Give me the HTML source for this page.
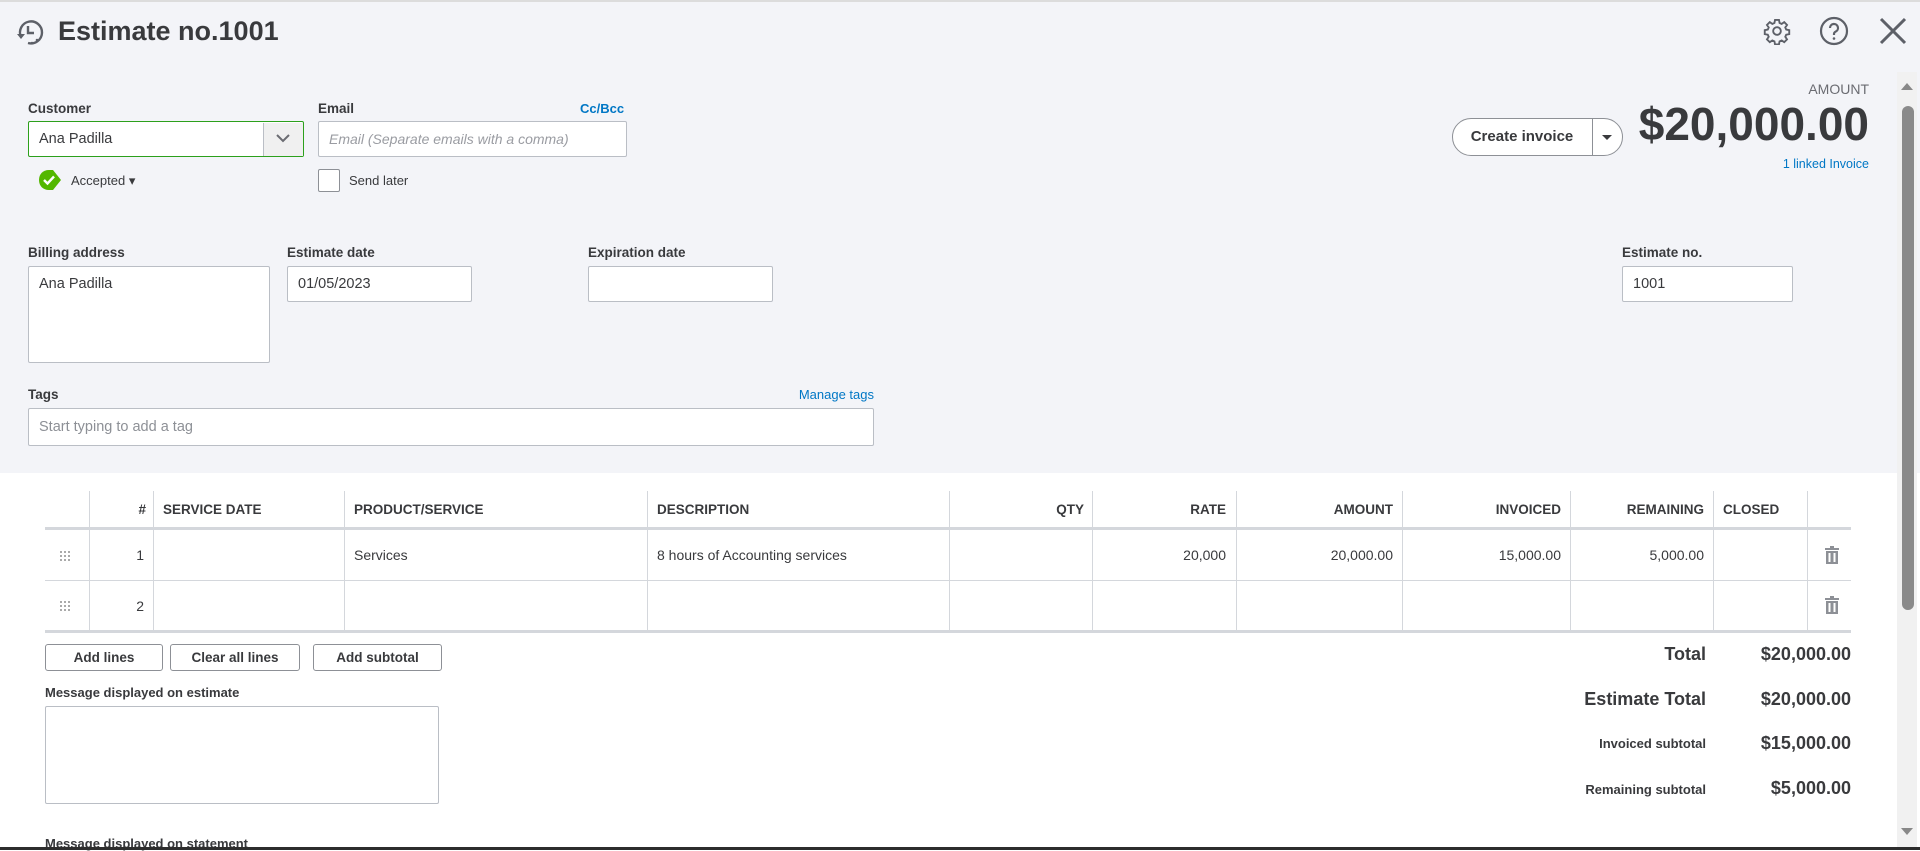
<!DOCTYPE html>
<html><head><meta charset="utf-8"><style>
*{box-sizing:border-box;margin:0;padding:0}
body{width:1920px;height:850px;overflow:hidden;background:#fff;font-family:"Liberation Sans",sans-serif;color:#393a3d;position:relative}
.a{position:absolute}
.top{left:0;top:0;width:1920px;height:473px;background:#f3f4f8;border-top:2px solid #dcdcdc}
.lbl{font-size:13.5px;font-weight:bold;color:#393a3d}
.inp{background:#fff;border:1px solid #babec5;border-radius:2px;font-size:14.5px;padding-left:10px;display:flex;align-items:center}
.lnk{color:#0077c5;font-size:13px;font-weight:bold}
.vl{width:1px;background:#d4d7dc}
.th{font-size:13.5px;font-weight:bold;color:#393a3d;top:502px}
.td{font-size:14px;color:#393a3d}
.btn{border:1px solid #8d9096;border-radius:3px;background:#fff;font-size:13.5px;font-weight:bold;display:flex;align-items:center;justify-content:center;top:644px;height:27px}
.tr{text-align:right;font-weight:bold;color:#393a3d}
</style></head><body>
<div class="a top"></div>
<svg class="a" style="left:13px;top:17px" width="32" height="30" viewBox="0 0 32 30" fill="none" stroke="#5d6068" stroke-width="2.4"><path d="M8 20 A11 11 0 1 1 15 26"/><path d="M15 9 V16 H21"/><path d="M4 17 L8 22 L12 17" fill="#5d6068" stroke="none"/><circle cx="19" cy="26" r="1.3" fill="#5d6068" stroke="none"/><circle cx="24" cy="23" r="1.3" fill="#5d6068" stroke="none"/></svg>
<div class="a" style="left:58px;top:16px;font-size:27px;font-weight:bold;color:#393a3d">Estimate no.1001</div>
<svg class="a" style="left:1763px;top:17px" width="28" height="28" viewBox="0 0 24 24" fill="none" stroke="#5d6068" stroke-width="1.6"><circle cx="12" cy="12" r="3.3"/><path d="M10.3 2.5h3.4l.5 2.6 1.8.8 2.2-1.5 2.4 2.4-1.5 2.2.8 1.8 2.6.5v3.4l-2.6.5-.8 1.8 1.5 2.2-2.4 2.4-2.2-1.5-1.8.8-.5 2.6h-3.4l-.5-2.6-1.8-.8-2.2 1.5-2.4-2.4 1.5-2.2-.8-1.8-2.6-.5v-3.4l2.6-.5.8-1.8-1.5-2.2 2.4-2.4 2.2 1.5 1.8-.8z"/></svg>
<svg class="a" style="left:1819px;top:16px" width="30" height="30" viewBox="0 0 30 30" fill="none" stroke="#5d6068" stroke-width="2.2"><circle cx="15" cy="15" r="13"/><path d="M11 12a4 4 0 1 1 5.5 3.7c-1 .5-1.5 1.2-1.5 2.3v1"/><circle cx="15" cy="22.5" r="1.3" fill="#5d6068" stroke="none"/></svg>
<svg class="a" style="left:1879px;top:17px" width="28" height="28" viewBox="0 0 28 28" stroke="#5d6068" stroke-width="3"><path d="M2 2L26 26M26 2L2 26"/></svg>

<div class="a lbl" style="left:28px;top:101px">Customer</div>
<div class="a inp" style="left:28px;top:121px;width:276px;height:36px;border:1.5px solid #2ca01c">Ana Padilla</div>
<div class="a" style="left:263px;top:122.5px;width:40px;height:33px;background:#f0f0f0;border-left:1px solid #babec5"></div>
<svg class="a" style="left:275px;top:132px" width="16" height="12" viewBox="0 0 16 12" fill="none" stroke="#6b6c72" stroke-width="2"><path d="M2 3l6 6 6-6"/></svg>
<svg class="a" style="left:38px;top:169px" width="24" height="22" viewBox="0 0 24 22"><path d="M11 1h4l8 10-8 10h-4C5 21 1 17 1 11S5 1 11 1z" fill="#53b700"/><path d="M6 11l3.5 3.5L16 7.5" fill="none" stroke="#fff" stroke-width="2.4"/></svg>
<div class="a" style="left:71px;top:173px;font-size:13px">Accepted ▾</div>

<div class="a lbl" style="left:318px;top:101px">Email</div>
<div class="a lnk" style="left:580px;top:101px">Cc/Bcc</div>
<div class="a inp" style="left:318px;top:121px;width:309px;height:36px;color:#9a9ca2;font-style:italic;font-size:14px">Email (Separate emails with a comma)</div>
<div class="a" style="left:318px;top:169px;width:22px;height:23px;border:1px solid #8d9096;border-radius:2px;background:#fff"></div>
<div class="a" style="left:349px;top:173px;font-size:13px">Send later</div>

<div class="a" style="left:1780px;top:81px;font-size:14px;color:#6b6c72;width:89px;text-align:right">AMOUNT</div>
<div class="a" style="left:1580px;top:97px;width:289px;text-align:right;font-size:46px;font-weight:bold;color:#393a3d">$20,000.00</div>
<div class="a lnk" style="left:1700px;top:157px;width:169px;text-align:right;font-weight:normal;font-size:12.5px">1 linked Invoice</div>
<div class="a" style="left:1452px;top:118px;width:171px;height:38px;border:1px solid #8d9096;border-radius:19px;background:#fff"></div>
<div class="a" style="left:1452px;top:128px;width:140px;text-align:center;font-size:15px;font-weight:bold">Create invoice</div>
<div class="a" style="left:1592px;top:119px;width:1px;height:36px;background:#8d9096"></div>
<div class="a" style="left:1602px;top:135px;width:0;height:0;border-left:5px solid transparent;border-right:5px solid transparent;border-top:5px solid #393a3d"></div>

<div class="a lbl" style="left:28px;top:245px">Billing address</div>
<div class="a inp" style="left:28px;top:266px;width:242px;height:97px;align-items:flex-start;padding-top:9px">Ana Padilla</div>
<div class="a lbl" style="left:287px;top:245px">Estimate date</div>
<div class="a inp" style="left:287px;top:266px;width:185px;height:36px">01/05/2023</div>
<div class="a lbl" style="left:588px;top:245px">Expiration date</div>
<div class="a inp" style="left:588px;top:266px;width:185px;height:36px"></div>
<div class="a lbl" style="left:1622px;top:245px">Estimate no.</div>
<div class="a inp" style="left:1622px;top:266px;width:171px;height:36px">1001</div>

<div class="a lbl" style="left:28px;top:387px">Tags</div>
<div class="a lnk" style="left:760px;top:387px;width:114px;text-align:right;font-weight:normal">Manage tags</div>
<div class="a inp" style="left:28px;top:408px;width:846px;height:38px;color:#8d9096">Start typing to add a tag</div>

<div class="a" style="left:45px;top:527px;width:1806px;height:3px;background:#d4d7dc"></div>
<div class="a" style="left:45px;top:580px;width:1806px;height:1px;background:#d4d7dc"></div>
<div class="a" style="left:45px;top:630px;width:1806px;height:3px;background:#d4d7dc"></div>
<div class="a vl" style="left:89px;top:491px;height:140px"></div>
<div class="a vl" style="left:153px;top:491px;height:140px"></div>
<div class="a vl" style="left:344px;top:491px;height:140px"></div>
<div class="a vl" style="left:647px;top:491px;height:140px"></div>
<div class="a vl" style="left:949px;top:491px;height:140px"></div>
<div class="a vl" style="left:1092px;top:491px;height:140px"></div>
<div class="a vl" style="left:1236px;top:491px;height:140px"></div>
<div class="a vl" style="left:1402px;top:491px;height:140px"></div>
<div class="a vl" style="left:1570px;top:491px;height:140px"></div>
<div class="a vl" style="left:1713px;top:491px;height:140px"></div>
<div class="a vl" style="left:1807px;top:491px;height:140px"></div>

<div class="a th" style="left:120px;width:26px;text-align:right">#</div>
<div class="a th" style="left:163px">SERVICE DATE</div>
<div class="a th" style="left:354px">PRODUCT/SERVICE</div>
<div class="a th" style="left:657px">DESCRIPTION</div>
<div class="a th" style="left:1000px;width:84px;text-align:right">QTY</div>
<div class="a th" style="left:1140px;width:86px;text-align:right">RATE</div>
<div class="a th" style="left:1300px;width:93px;text-align:right">AMOUNT</div>
<div class="a th" style="left:1450px;width:111px;text-align:right">INVOICED</div>
<div class="a th" style="left:1590px;width:114px;text-align:right">REMAINING</div>
<div class="a th" style="left:1723px">CLOSED</div>

<svg class="a" style="left:60px;top:551px" width="10" height="10" viewBox="0 0 10 10" fill="#aaa"><rect x="0" y="0" width="2" height="2"/><rect x="4" y="0" width="2" height="2"/><rect x="8" y="0" width="2" height="2"/><rect x="0" y="4" width="2" height="2"/><rect x="4" y="4" width="2" height="2"/><rect x="8" y="4" width="2" height="2"/><rect x="0" y="8" width="2" height="2"/><rect x="4" y="8" width="2" height="2"/><rect x="8" y="8" width="2" height="2"/></svg>
<svg class="a" style="left:60px;top:601px" width="10" height="10" viewBox="0 0 10 10" fill="#aaa"><rect x="0" y="0" width="2" height="2"/><rect x="4" y="0" width="2" height="2"/><rect x="8" y="0" width="2" height="2"/><rect x="0" y="4" width="2" height="2"/><rect x="4" y="4" width="2" height="2"/><rect x="8" y="4" width="2" height="2"/><rect x="0" y="8" width="2" height="2"/><rect x="4" y="8" width="2" height="2"/><rect x="8" y="8" width="2" height="2"/></svg>
<div class="a td" style="left:120px;top:547px;width:24px;text-align:right">1</div>
<div class="a td" style="left:120px;top:598px;width:24px;text-align:right">2</div>
<div class="a td" style="left:354px;top:547px">Services</div>
<div class="a td" style="left:657px;top:547px">8 hours of Accounting services</div>
<div class="a td" style="left:1140px;top:547px;width:86px;text-align:right">20,000</div>
<div class="a td" style="left:1300px;top:547px;width:93px;text-align:right">20,000.00</div>
<div class="a td" style="left:1450px;top:547px;width:111px;text-align:right">15,000.00</div>
<div class="a td" style="left:1590px;top:547px;width:114px;text-align:right">5,000.00</div>
<svg class="a" style="left:1825px;top:546px" width="14" height="18" viewBox="0 0 14 18" fill="#8d9096"><rect x="0" y="2" width="14" height="2"/><rect x="5" y="0" width="4" height="2"/><path d="M1 5h12v13H1z M3.5 7v9h2V7z M8.5 7v9h2V7z" fill-rule="evenodd"/></svg>
<svg class="a" style="left:1825px;top:596px" width="14" height="18" viewBox="0 0 14 18" fill="#8d9096"><rect x="0" y="2" width="14" height="2"/><rect x="5" y="0" width="4" height="2"/><path d="M1 5h12v13H1z M3.5 7v9h2V7z M8.5 7v9h2V7z" fill-rule="evenodd"/></svg>

<div class="a btn" style="left:45px;width:118px">Add lines</div>
<div class="a btn" style="left:170px;width:130px">Clear all lines</div>
<div class="a btn" style="left:313px;width:129px">Add subtotal</div>

<div class="a lbl" style="left:45px;top:685px;font-size:13px">Message displayed on estimate</div>
<div class="a inp" style="left:45px;top:706px;width:394px;height:98px"></div>
<div class="a lbl" style="left:45px;top:836px;font-size:13px">Message displayed on statement</div>

<div class="a tr" style="left:1500px;top:644px;width:206px;font-size:18px">Total</div>
<div class="a tr" style="left:1700px;top:644px;width:151px;font-size:18px">$20,000.00</div>
<div class="a tr" style="left:1500px;top:689px;width:206px;font-size:18px">Estimate Total</div>
<div class="a tr" style="left:1700px;top:689px;width:151px;font-size:18px">$20,000.00</div>
<div class="a tr" style="left:1500px;top:736px;width:206px;font-size:13px">Invoiced subtotal</div>
<div class="a tr" style="left:1700px;top:733px;width:151px;font-size:18px">$15,000.00</div>
<div class="a tr" style="left:1500px;top:782px;width:206px;font-size:13px">Remaining subtotal</div>
<div class="a tr" style="left:1700px;top:778px;width:151px;font-size:18px">$5,000.00</div>

<div class="a" style="left:1897px;top:72px;width:20px;height:776px;background:#f1f1f1"></div>
<div class="a" style="left:1901px;top:83px;width:0;height:0;border-left:6px solid transparent;border-right:6px solid transparent;border-bottom:7px solid #888"></div>
<div class="a" style="left:1902px;top:106px;width:12px;height:504px;background:#8a8a8a;border-radius:6px"></div>
<div class="a" style="left:1901px;top:828px;width:0;height:0;border-left:6px solid transparent;border-right:6px solid transparent;border-top:7px solid #888"></div>
<div class="a" style="left:0;top:847px;width:1920px;height:3px;background:#2d2d2d"></div>
</body></html>
